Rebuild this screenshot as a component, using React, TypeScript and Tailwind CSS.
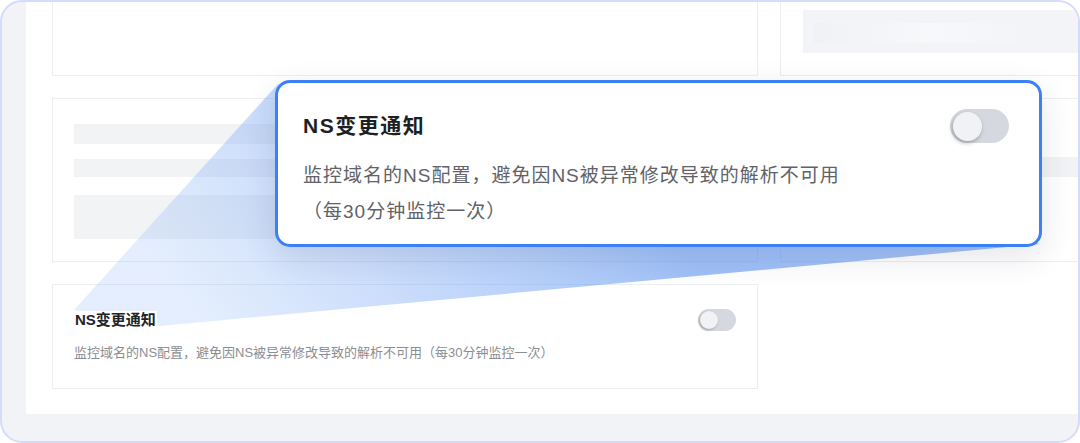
import React from "react";

function Toggle({ big }: { big?: boolean }) {
  if (big) {
    return (
      <div className="w-[59px] h-[34px] rounded-full bg-[#d5d8de] flex items-center pl-[3px] shrink-0">
        <div className="w-[29px] h-[29px] rounded-full bg-[#f1f2f6] shadow-[-1px_2px_4px_rgba(0,0,0,0.28)]" />
      </div>
    );
  }
  return (
    <div className="w-[38px] h-[22px] rounded-full bg-[#d5d8de] flex items-center pl-[2px] shrink-0">
      <div className="w-[18px] h-[18px] rounded-full bg-[#f1f2f6] shadow-[-1px_1px_3px_rgba(0,0,0,0.28)]" />
    </div>
  );
}

export default function App() {
  const font = { fontFamily: '"Liberation Sans", "Noto Sans CJK SC", sans-serif' };
  return (
    <div className="w-[1080px] h-[443px] bg-white" style={font}>
      <div className="relative w-[1080px] h-[443px] overflow-hidden rounded-[22px] border-2 border-[#d4dbfb] bg-[#f2f3f7] flex flex-col">
        {/* white panel */}
        <div className="ml-[24px] h-[412px] bg-white overflow-hidden pl-[26px]">
          <div className="-mt-[22px] grid grid-cols-[706px_330px] gap-x-[22px] gap-y-[22px]">
            {/* row 1 */}
            <div className="h-[96px] border border-[#eceef2]" />
            <div className="h-[96px] border border-[#eceef2] pl-[22px] pt-[29px]">
              <div className="h-[43px] bg-[#f3f4f7] pl-[11px] pt-[13px]">
                <div className="w-[224px] h-[20px] bg-[linear-gradient(90deg,#f0f1f4,#f7f8fa_50%,#f3f4f7)]" />
              </div>
            </div>
            {/* row 2 */}
            <div className="h-[164px] border border-[#eceef2] pl-[21px] pt-[25px] flex flex-col">
              <div className="w-[640px] h-[20px] bg-[#f2f3f5]" />
              <div className="w-[640px] h-[18px] bg-[#f2f3f5] mt-[15px]" />
              <div className="w-[640px] h-[44px] bg-[#f2f3f5] mt-[18px]" />
            </div>
            <div className="h-[164px] border border-[#eceef2] pl-[22px] pt-[58px]">
              <div className="w-[320px] h-[20px] bg-[#f2f3f5]" />
            </div>
            {/* row 3 */}
            <div className="h-[105px] border border-[#eceef2] pl-[21px] pr-[21px] pt-[24px]">
              <div className="flex items-center justify-between">
                <div className="relative z-[2] bg-white text-[15px] leading-[18px] font-bold text-[#1f2329] px-[1px]">
                  NS变更通知
                </div>
                <Toggle />
              </div>
              <div className="mt-[12px] text-[13px] leading-[20px] text-[#8a8d93]">
                监控域名的NS配置，避免因NS被异常修改导致的解析不可用（每30分钟监控一次）
              </div>
            </div>
            <div />
          </div>
        </div>

        {/* callout wedge */}
        <svg
          className="absolute -left-[2px] -top-[2px] z-[1] pointer-events-none"
          width="1080"
          height="443"
          viewBox="0 0 1080 443"
        >
          <defs>
            <linearGradient id="wedge" gradientUnits="userSpaceOnUse" x1="560" y1="90" x2="220" y2="350">
              <stop offset="0" stopColor="#4f8cf2" stopOpacity="0.55" />
              <stop offset="0.55" stopColor="#6b9ef4" stopOpacity="0.38" />
              <stop offset="1" stopColor="#92baf7" stopOpacity="0.25" />
            </linearGradient>
          </defs>
          <polygon points="278,84 1040,244 160,326 74,310" fill="url(#wedge)" />
        </svg>

        {/* popup */}
        <div className="absolute left-[273px] top-[78px] z-[3] w-[767px] h-[167px] rounded-[15px] border-[3px] border-[#3b80f5] bg-white shadow-[0_10px_32px_rgba(30,40,70,0.12)] pl-[25px] pr-[30px] pt-[26px]">
          <div className="flex items-center justify-between">
            <div className="text-[21px] leading-[28px] font-bold text-[#1d1f24] tracking-[1.5px]">NS变更通知</div>
            <Toggle big />
          </div>
          <div className="mt-[15px] text-[19px] leading-[36px] text-[#5f6268] tracking-[1px]">
            <div>监控域名的NS配置，避免因NS被异常修改导致的解析不可用</div>
            <div>（每30分钟监控一次）</div>
          </div>
        </div>
      </div>
    </div>
  );
}
